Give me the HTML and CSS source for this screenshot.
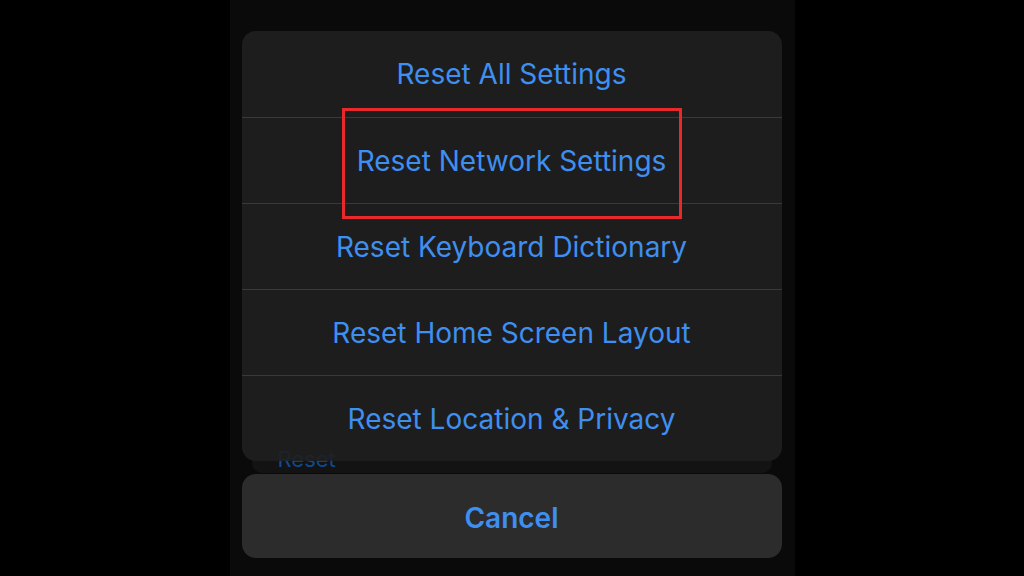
FILE: index.html
```html
<!DOCTYPE html>
<html lang="en">
<head>
<meta charset="utf-8">
<title>Reset</title>
<link rel="stylesheet" href="styles.css">
</head>
<body>
<div class="screen">
  <div class="backdrop">
    <div class="bg-card">
      <span class="bg-link">Reset</span>
    </div>
  </div>
  <div class="sheet-wrap">
    <div class="sheet">
      <div class="row">Reset All Settings</div>
      <div class="row">Reset Network Settings</div>
      <div class="row">Reset Keyboard Dictionary</div>
      <div class="row">Reset Home Screen Layout</div>
      <div class="row">Reset Location &amp; Privacy</div>
    </div>
    <div class="cancel">Cancel</div>
  </div>
  <div class="highlight"></div>
</div>
</body>
</html>
```
FILE: styles.css
```css
html, body {
  margin: 0;
  padding: 0;
  background: #000;
  height: 100%;
  overflow: hidden;
}
.screen {
  position: relative;
  width: 565px;
  height: 576px;
  margin: 0 auto;
  background: #0a0a0a;
  font-family: "Inter", "Liberation Sans", sans-serif;
}
.backdrop {
  display: flex;
  flex-direction: column;
  justify-content: flex-end;
  height: 576px;
  padding: 0 23px 103px 22px;
  box-sizing: border-box;
}
.bg-card {
  height: 60px;
  background: #131313;
  border-radius: 0 0 10px 10px;
  display: flex;
  align-items: flex-end;
  padding: 0 0 3px 26px;
}
.bg-link {
  color: #0f4a90;
  font-size: 22px;
  line-height: 22px;
}
.sheet-wrap {
  position: absolute;
  top: 31px;
  left: 12px;
  width: 540px;
  display: flex;
  flex-direction: column;
  gap: 13px;
}
.sheet {
  background: rgba(31, 31, 31, 0.9);
  border-radius: 14px;
  overflow: hidden;
}
.row {
  height: 86px;
  display: flex;
  align-items: center;
  justify-content: center;
  color: #3f8ff0;
  font-size: 28px;
  border-top: 1px solid #393939;
  box-sizing: border-box;
}
.row:first-child {
  border-top: none;
}
.cancel {
  height: 84px;
  padding-top: 3px;
  box-sizing: border-box;
  background: #2c2c2c;
  border-radius: 14px;
  display: flex;
  align-items: center;
  justify-content: center;
  color: #3f8ff0;
  font-size: 28px;
  font-weight: 600;
}
.highlight {
  position: absolute;
  left: 112px;
  top: 108px;
  width: 340px;
  height: 111px;
  box-sizing: border-box;
  border: 3px solid #e8292b;
}
```
